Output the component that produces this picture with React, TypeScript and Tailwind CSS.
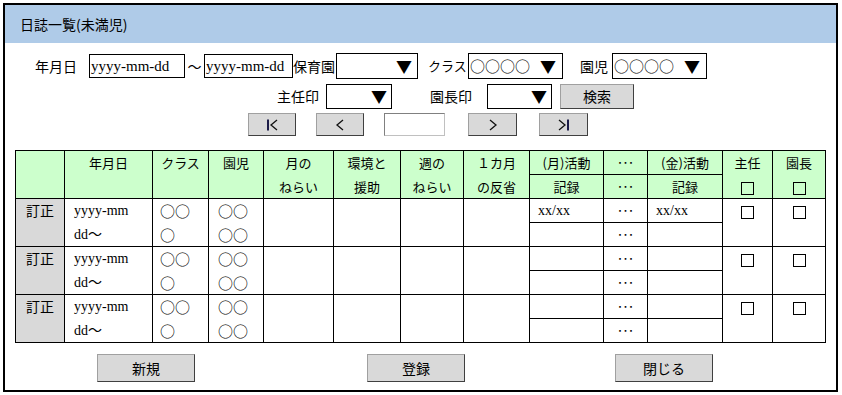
const jp = "font-['Noto_Sans_CJK_JP',sans-serif]"
const serif = "font-['Liberation_Serif','Noto_Sans_CJK_JP',serif]"

function Arrow() {
  return <span className={`${jp} text-[16px] leading-none`}>▼</span>
}

function NavIcon({ kind }: { kind: 'first' | 'prev' | 'next' | 'last' }) {
  return (
    <svg width="14" height="12" viewBox="0 0 14 12" fill="none" stroke="#111" strokeWidth="1.3">
      {kind === 'first' && (
        <>
          <rect x="2" y="0.5" width="2" height="11" fill="#1c1c48" stroke="none" />
          <polyline points="12,1 6,6 12,11" />
        </>
      )}
      {kind === 'prev' && <polyline points="10,1 4,6 10,11" />}
      {kind === 'next' && <polyline points="4,1 10,6 4,11" />}
      {kind === 'last' && (
        <>
          <polyline points="2,1 8,6 2,11" />
          <rect x="10" y="0.5" width="2" height="11" fill="#1c1c48" stroke="none" />
        </>
      )}
    </svg>
  )
}

const btn =
  'flex items-center justify-center bg-[#d9d9d9] border border-t-[#a0a0a0] border-l-[#a0a0a0] border-b-[#404040] border-r-[#404040]'

const td = 'border border-black p-0 align-top text-center leading-[23px]'

// checkbox square
function Check() {
  return <span className="inline-block align-middle w-[13px] h-[13px] border border-black" />
}

function BodyRows({ first }: { first: boolean }) {
  return (
    <>
      <tr className="h-[24px]">
        <td rowSpan={2} className={`${td} bg-[#d9d9d9] text-[14px]`}>訂正</td>
        <td rowSpan={2} className={`${td} text-left pl-[9px] ${serif} text-[14px]`}>
          <div className="h-[24px]">yyyy-mm</div>
          <div className="h-[23px]">dd～</div>
        </td>
        <td rowSpan={2} className={`${td} text-left pl-[7px] text-[15px]`}>
          <div className="h-[24px]">○○</div>
          <div className="h-[23px]">○</div>
        </td>
        <td rowSpan={2} className={`${td} text-left pl-[9px] text-[15px]`}>
          <div className="h-[24px]">○○</div>
          <div className="h-[23px]">○○</div>
        </td>
        <td rowSpan={2} className={td} />
        <td rowSpan={2} className={td} />
        <td rowSpan={2} className={td} />
        <td rowSpan={2} className={td} />
        <td className={`${td} text-left pl-[8px] ${serif} text-[14px]`}>{first ? 'xx/xx' : ''}</td>
        <td className={`${td} text-[11px]`}>･･･</td>
        <td className={`${td} text-left pl-[8px] ${serif} text-[14px]`}>{first ? 'xx/xx' : ''}</td>
        <td rowSpan={2} className={td}>
          <Check />
        </td>
        <td rowSpan={2} className={td}>
          <Check />
        </td>
      </tr>
      <tr className="h-[24px]">
        <td className={td} />
        <td className={`${td} text-[11px]`}>･･･</td>
        <td className={td} />
      </tr>
    </>
  )
}

export default function App() {
  return (
    <div className={`${jp} bg-white text-black w-[842px] h-[395px] pt-[3px] pl-[3px]`}>
      <div className="w-[835px] h-[389px] border-2 border-black flex flex-col">
        <div className="h-[38px] bg-[#afcbe8] flex items-center pl-[15px] text-[14px]">日誌一覧(未満児)</div>

        {/* search row 1 */}
        <div className="flex items-center h-[26px] mt-[10px] text-[14px]">
          <span className="ml-[30px]">年月日</span>
          <div className={`ml-[12px] w-[96px] h-[24px] border border-black flex items-center pl-[1px] ${serif} text-[15px]`}>
            yyyy-mm-dd
          </div>
          <span className="w-[19px] text-center">～</span>
          <div className={`w-[89px] h-[24px] border border-black flex items-center pl-[1px] ${serif} text-[15px] whitespace-nowrap overflow-hidden`}>
            yyyy-mm-dd
          </div>
          <span className="w-[43px] whitespace-nowrap">保育園</span>
          <div className="w-[82px] h-[26px] border border-black flex items-center justify-end pr-[5px]">
            <Arrow />
          </div>
          <span className="ml-[10px] w-[40px] whitespace-nowrap text-[13px]">クラス</span>
          <div className="w-[95px] h-[26px] border border-black flex items-center justify-between pl-[1px] pr-[6px]">
            <span className="text-[15px]">○○○○</span>
            <Arrow />
          </div>
          <span className="ml-[17px] w-[32px]">園児</span>
          <div className="w-[95px] h-[26px] border border-black flex items-center justify-between pl-[1px] pr-[6px]">
            <span className="text-[15px]">○○○○</span>
            <Arrow />
          </div>
        </div>

        {/* search row 2 */}
        <div className="flex items-center h-[26px] mt-[4px] text-[14px]">
          <span className="ml-[272px] w-[42px]">主任印</span>
          <div className="ml-[7px] w-[66px] h-[25px] border border-black flex items-center justify-end pr-[4px]">
            <Arrow />
          </div>
          <span className="ml-[38px] w-[42px]">園長印</span>
          <div className="ml-[15px] w-[65px] h-[25px] border border-black flex items-center justify-end pr-[4px]">
            <Arrow />
          </div>
          <button className={`${btn} ml-[8px] w-[74px] h-[25px]`}>検索</button>
        </div>

        {/* pager */}
        <div className="flex items-center h-[23px] mt-[4px]">
          <button className={`${btn} ml-[243px] w-[48px] h-[23px]`}>
            <NavIcon kind="first" />
          </button>
          <button className={`${btn} ml-[20px] w-[48px] h-[23px]`}>
            <NavIcon kind="prev" />
          </button>
          <div className="ml-[20px] w-[61px] h-[23px] bg-white border border-t-[#808080] border-l-[#808080] border-b-[#c0c0c0] border-r-[#c0c0c0]" />
          <button className={`${btn} ml-[23px] w-[49px] h-[23px]`}>
            <NavIcon kind="next" />
          </button>
          <button className={`${btn} ml-[22px] w-[49px] h-[23px]`}>
            <NavIcon kind="last" />
          </button>
        </div>

        {/* list */}
        <table className="ml-[10px] mt-[14px] w-[810px] table-fixed border-collapse text-[13px]">
          <colgroup>
            <col className="w-[49px]" />
            <col className="w-[88px]" />
            <col className="w-[56px]" />
            <col className="w-[55px]" />
            <col className="w-[70px]" />
            <col className="w-[67px]" />
            <col className="w-[63px]" />
            <col className="w-[66px]" />
            <col className="w-[74px]" />
            <col className="w-[44px]" />
            <col className="w-[75px]" />
            <col className="w-[50px]" />
            <col className="w-[53px]" />
          </colgroup>
          <tbody>
            <tr className="h-[24px] bg-[#ccffcc]">
              <td rowSpan={2} className={td} />
              <td rowSpan={2} className={td}>年月日</td>
              <td rowSpan={2} className={td}>クラス</td>
              <td rowSpan={2} className={td}>園児</td>
              <td rowSpan={2} className={td}>
                <div className="h-[24px]">月の</div>
                <div className="h-[23px]">ねらい</div>
              </td>
              <td rowSpan={2} className={td}>
                <div className="h-[24px]">環境と</div>
                <div className="h-[23px]">援助</div>
              </td>
              <td rowSpan={2} className={td}>
                <div className="h-[24px]">週の</div>
                <div className="h-[23px]">ねらい</div>
              </td>
              <td rowSpan={2} className={td}>
                <div className="h-[24px]">１カ月</div>
                <div className="h-[23px]">の反省</div>
              </td>
              <td className={td}>(月)活動</td>
              <td className={`${td} text-[11px]`}>･･･</td>
              <td className={td}>(金)活動</td>
              <td rowSpan={2} className={td}>
                <div className="h-[24px]">主任</div>
                <div className="h-[23px]">
                  <Check />
                </div>
              </td>
              <td rowSpan={2} className={td}>
                <div className="h-[24px]">園長</div>
                <div className="h-[23px]">
                  <Check />
                </div>
              </td>
            </tr>
            <tr className="h-[24px] bg-[#ccffcc]">
              <td className={td}>記録</td>
              <td className={`${td} text-[11px]`}>･･･</td>
              <td className={td}>記録</td>
            </tr>
            <BodyRows first />
            <BodyRows first={false} />
            <BodyRows first={false} />
          </tbody>
        </table>

        {/* actions */}
        <div className="flex items-center h-[28px] mt-[11px] text-[14px]">
          <button className={`${btn} ml-[92px] w-[98px] h-[28px]`}>新規</button>
          <button className={`${btn} ml-[172px] w-[98px] h-[28px]`}>登録</button>
          <button className={`${btn} ml-[150px] w-[98px] h-[28px]`}>閉じる</button>
        </div>
      </div>
    </div>
  )
}
